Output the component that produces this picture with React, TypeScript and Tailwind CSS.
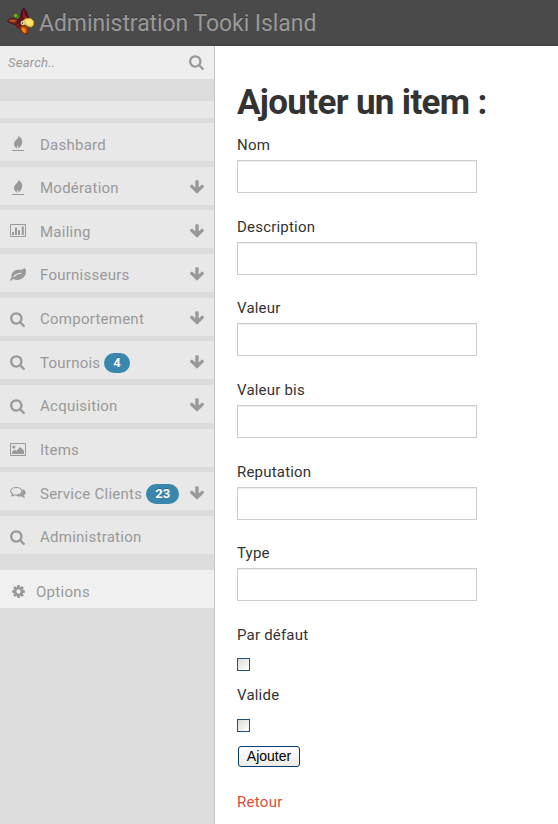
import React from "react";

const SEARCH =
  "M1152 832q0-185-131.5-316.5t-316.5-131.5-316.5 131.5-131.5 316.5 131.5 316.5 316.5 131.5 316.5-131.5 131.5-316.5zm512 832q0 52-38 90t-90 38q-54 0-90-38l-343-342q-179 124-399 124-143 0-273.5-55.5t-225-150-150-225-55.5-273.5 55.5-273.5 150-225 225-150 273.5-55.5 273.5 55.5 225 150 150 225 55.5 273.5q0 220-124 399l343 343q37 37 37 90z";
const ARROW =
  "M1675 832q0 53-37 90l-651 652q-39 37-91 37-53 0-90-37l-651-652q-38-36-38-90 0-53 38-91l74-75q39-37 91-37 53 0 90 37l294 294v-704q0-52 38-90t90-38h128q52 0 90 38t38 90v704l294-294q37-37 90-37 52 0 91 37l75 75q37 39 37 91z";
const LEAF =
  "M1280 704q0-26-19-45t-45-19q-172 0-318 49.5t-259.5 134-235.5 219.5q-19 21-19 45 0 26 19 45t45 19q24 0 45-19 27-24 74-71t67-66q137-124 268.5-176t313.5-52q26 0 45-19t19-45zm512-198q0 95-20 193-46 224-184.5 383t-357.5 268q-214 108-438 108-148 0-286-47-15-5-88-42t-96-37q-16 0-39.5 32t-45 70-52.5 70-60 32q-43 0-63.5-17.5t-45.5-59.5q-2-4-6-11t-5.5-10-3-9.5-1.5-13.5q0-35 31-73.5t68-65.5 68-56 31-48q0-4-14-38t-16-44q-9-51-9-104 0-115 43.5-220t119-184.5 170.5-139 204-95.5q55-18 145-25.5t179.5-9 178.5-6 163.5-24 113.5-56.5l29.5-29.5 29.5-28 27-20 36.5-16 43.5-4.5q39 0 70.5 46t47.5 112 24 124 8 96z";
const COG =
  "M1152 896q0-106-75-181t-181-75-181 75-75 181 75 181 181 75 181-75 75-181zm512-109v222q0 12-8 23t-20 13l-185 28q-19 54-39 91 35 50 107 138 10 12 10 25t-9 23q-27 37-99 108t-94 71q-12 0-26-9l-138-108q-44 23-91 38-16 136-29 186-7 28-36 28h-222q-14 0-24.5-8.5t-11.5-21.5l-28-184q-49-16-90-37l-141 107q-10 9-25 9-14 0-25-11-126-114-165-168-7-10-7-23 0-12 8-23 15-21 51-66.5t54-70.5q-27-50-41-99l-183-27q-13-2-21-12.5t-8-23.5v-222q0-12 8-23t19-13l186-28q14-46 39-92-40-57-107-138-10-12-10-24 0-10 9-23 26-36 98.5-107.5t94.5-71.5q13 0 26 10l138 107q44-23 91-38 16-136 29-186 7-28 36-28h222q14 0 24.5 8.5t11.5 21.5l28 184q49 16 90 37l142-107q9-9 24-9 13 0 25 10 129 119 165 170 7 8 7 22 0 12-8 23-15 21-51 66.5t-54 70.5q26 50 41 98l183 28q13 2 21 12.5t8 23.5z";

function Glyph({ d, className = "size-4" }: { d: string; className?: string }) {
  return (
    <svg viewBox="0 0 1792 1792" fill="currentColor" className={className}>
      <path d={d} />
    </svg>
  );
}

function Flame() {
  return (
    <svg viewBox="0 0 16 16" className="size-4" fill="currentColor">
      <path d="M8.300 0C9.200 2.500 4 4.300 4 7.900C4 10.200 5.300 11.700 7.500 12.800C6.600 11 7 9.900 7.700 9.200C7.700 10.500 8.200 11.300 8.700 12.200C10.700 10.700 12.300 8.200 12.200 5.400C12.100 3 10.700 1 8.300 0Z" />
      <path d="M2 14h12v1H2z" />
    </svg>
  );
}

function Chart() {
  return (
    <svg viewBox="0 0 16 14" className="h-3.5 w-4" fill="currentColor">
      <path fillRule="evenodd" d="M1 0h14q1 0 1 1v11q0 1-1 1H1q-1 0-1-1V1q0-1 1-1zM1 1v11h14V1z" />
      <path d="M2 8h2v3H2zM5 3.500h2V11H5zM8 6h2v5H8zM11.800 2.500h2V11h-2z" />
    </svg>
  );
}

function Picture() {
  return (
    <svg viewBox="0 0 16 14" className="h-3.5 w-4" fill="currentColor">
      <path fillRule="evenodd" d="M1 0h14q1 0 1 1v11q0 1-1 1H1q-1 0-1-1V1q0-1 1-1zM1 1v11h14V1z" />
      <circle cx="3.800" cy="4" r="1.600" />
      <path d="M2 11V8.800L4.700 6.500 6.200 7.900 10.200 4 14 7.800V11z" />
    </svg>
  );
}

function Comments() {
  return (
    <svg viewBox="0 0 16 14" className="h-3.5 w-4" fill="none" stroke="currentColor" strokeWidth="1.1" strokeLinejoin="round">
      <path d="M6.300 1.500C3.200 1.500.7 3.100.7 5.200c0 1.200.8 2.200 2 2.900-.2.8-.6 1.300-1.100 1.800 1.200-.1 2.100-.5 2.900-1.100.6.1 1.200.2 1.800.2 3.100 0 5.600-1.700 5.600-3.800S9.400 1.500 6.300 1.500z" />
      <path
        d="M12.900 3.200c1.500.8 2.500 2 2.500 3.300 0 1.300-.7 2.200-1.800 2.900.2.900.7 1.500 1.300 2.100-1.400 0-2.500-.6-3.200-1.300-2 .3-4 .1-5.300-.8 3.500 0 6.800-1.700 6.500-6.200z"
        fill="currentColor"
        strokeWidth=".4"
      />
    </svg>
  );
}

function Parrot() {
  return (
    <svg viewBox="0 0 28 28" className="size-7">
      <path d="M.5 12.500l3-2 4 0 5 2 2 3-3 2-4-1-3-1-3-1z" fill="#742517" stroke="#401010" strokeWidth=".7" />
      <path d="M2 12l5-.5 3 1.500-3 1.200-4-.7z" fill="#b6512d" />
      <path d="M6.500 7l2.500-1.500 3 1.500 .5 3.500-4 0z" fill="#477b16" />
      <circle cx="8.500" cy="7.500" r="1.500" fill="#86b51d" />
      <path d="M10.500 13l3-4 1.500-7 2-2 2 3 2 5 1.500 3-5 1.500-4 4-3 1z" fill="#651020" stroke="#320b15" strokeWidth=".8" />
      <path d="M16.500 2l1 5 2.500 3-1 1-3-2.500z" fill="#a11c2b" />
      <path d="M8 16l3 4.500 3-1 0-5z" fill="#7d191a" stroke="#401010" strokeWidth=".5" />
      <path d="M14 18l4 0 3.500 2-1 5.500-3 .5-3.500-3-1-3z" fill="#c44808" stroke="#4d210c" strokeWidth=".6" />
      <path d="M14.500 20.500l2.500-1 2 3.500-1 2-2-1z" fill="#f48a13" />
      <path d="M15 13l4-3 5 0 3 3 .2 4-2.700 2.500-3.500-.5-3-2-3 .5z" fill="#ebc446" stroke="#64480f" strokeWidth=".7" />
      <path d="M18 11.800l5-.8 2.700 2.500-.7 3.500-3 .5-3-2.500z" fill="#ffe372" />
      <circle cx="15.500" cy="15" r="1.900" fill="#d8e4d9" />
      <circle cx="15.500" cy="15" r=".8" fill="#17242a" />
    </svg>
  );
}

type Item = { label: string; icon: React.ReactNode; badge?: string; arrow?: boolean };

const items: Item[] = [
  { label: "Dashbard", icon: <Flame /> },
  { label: "Modération", icon: <Flame />, arrow: true },
  { label: "Mailing", icon: <Chart />, arrow: true },
  { label: "Fournisseurs", icon: <Glyph d={LEAF} />, arrow: true },
  { label: "Comportement", icon: <Glyph d={SEARCH} />, arrow: true },
  { label: "Tournois", icon: <Glyph d={SEARCH} />, badge: "4", arrow: true },
  { label: "Acquisition", icon: <Glyph d={SEARCH} />, arrow: true },
  { label: "Items", icon: <Picture /> },
  { label: "Service Clients", icon: <Comments />, badge: "23", arrow: true },
  { label: "Administration", icon: <Glyph d={SEARCH} /> },
];

const fields = ["Nom", "Description", "Valeur", "Valeur bis", "Reputation", "Type"];

function Check({ label }: { label: string }) {
  return (
    <label className="block h-[60.5px]">
      <span className="block h-5 leading-5">{label}</span>
      <input
        type="checkbox"
        className="mt-[13.3px] block size-[13px] appearance-none border border-[#1c5180] bg-linear-to-br from-[#dcdcd7] to-white"
      />
    </label>
  );
}

export default function App() {
  return (
    <div className="flex h-[824px] w-[558px] flex-col overflow-hidden bg-white font-[Roboto,sans-serif] text-[15px] tracking-[0.2px] text-[#333]">
      <header className="flex h-[46px] shrink-0 items-center border-b-2 border-[#464646] bg-[#4a4a4a] pl-[7px]">
        <Parrot />
        <span className="ml-1 pt-[3px] text-[23px] leading-[43px] tracking-[-0.07px] whitespace-nowrap text-[#999] [text-shadow:0_-1px_0_rgba(0,0,0,0.25)]">
          Administration Tooki Island
        </span>
      </header>
      <div className="flex min-h-0 flex-1">
        <aside className="flex w-[215px] shrink-0 flex-col border-r border-[#c5c5c5] bg-[#dcdcdc] text-[#999]">
          <div className="flex h-[33px] shrink-0 items-center bg-[#eee] pr-[9px] pl-2">
            <input
              placeholder="Search.."
              className="min-w-0 flex-1 text-[13px] tracking-[0.25px] italic outline-none placeholder:text-[#999]"
            />
            <Glyph d={SEARCH} className="mb-[2px] size-4" />
          </div>
          <div className="mt-[22px] h-[17px] shrink-0 bg-[#e8e8e8]" />
          <nav className="mt-[5px] flex shrink-0 flex-col gap-[5.67px]">
            {items.map((item) => (
              <a key={item.label} className="flex h-[38px] items-center bg-[#e8e8e8] pr-[9px] pl-[10px]">
                <span className="flex w-4 justify-center pt-[4px]">{item.icon}</span>
                <span className="ml-[14px] pt-[5px] leading-5 tracking-[0.25px] whitespace-nowrap">{item.label}</span>
                {item.badge && (
                  <span className="mt-[5px] ml-1 flex h-5 items-center rounded-full bg-[#3a87ad] px-[9px] text-[13px] font-bold tracking-normal text-white [text-shadow:0_-1px_0_rgba(0,0,0,0.25)]">
                    {item.badge}
                  </span>
                )}
                {item.arrow && <Glyph d={ARROW} className="mt-[3px] ml-auto size-4" />}
              </a>
            ))}
          </nav>
          <a className="mt-4 flex h-[38px] shrink-0 items-center bg-[#f0f0f0] pl-[11px]">
            <Glyph d={COG} className="mt-[5px] size-[15px]" />
            <span className="ml-[10px] pt-[6px] leading-5 tracking-[0.3px]">Options</span>
          </a>
        </aside>
        <main className="flex-1 pl-[22px]">
          <h1 className="mt-[37px] h-[52px] text-[35px] leading-10 font-bold tracking-[-0.67px]">Ajouter un item :</h1>
          <form>
            {fields.map((name) => (
              <label key={name} className="block h-[81.63px]">
                <span className="block h-[25px] leading-5">{name}</span>
                <input className="block h-[33px] w-60 border border-[#ccc] shadow-[inset_0_1px_1px_rgba(0,0,0,0.075)] outline-none" />
              </label>
            ))}
            <Check label="Par défaut" />
            <Check label="Valide" />
            <button
              type="button"
              className="ml-px block h-[21px] w-[62px] rounded-[3px] border border-[#003c74] bg-linear-to-b from-white to-[#ecebe5] font-['Liberation_Sans',sans-serif] text-[14px] leading-[19px] tracking-normal text-black"
            >
              Ajouter
            </button>
          </form>
          <a className="mt-[25px] block leading-5 tracking-[0.3px] text-[#dd4b39]">Retour</a>
        </main>
      </div>
    </div>
  );
}
